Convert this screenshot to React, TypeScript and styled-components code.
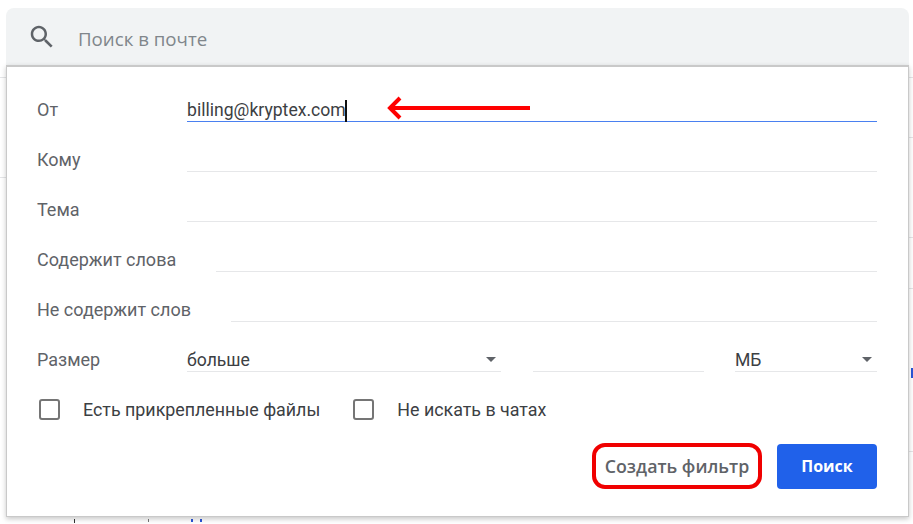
import React from 'react';
import styled, { createGlobalStyle } from 'styled-components';

const GlobalStyle = createGlobalStyle`
  html, body {
    margin: 0;
    padding: 0;
    background: #fff;
    overflow: hidden;
  }
  * { box-sizing: border-box; }
`;

const Page = styled.div`
  position: relative;
  width: 913px;
  height: 524px;
  padding: 8px 4px 0 6px;
  background: #fff;
  font-family: Roboto, "Liberation Sans", sans-serif;
  overflow: hidden;
`;

/* bits of the inbox list that show around the dialog */
const PeekLine = styled.div<{ $top: number; $left: number; $width: number }>`
  position: absolute;
  top: ${p => p.$top}px;
  left: ${p => p.$left}px;
  width: ${p => p.$width}px;
  height: 1px;
  background: #e4e5e7;
`;

const PeekMark = styled.div<{ $left: number; $top: number; $color: string; $w?: number; $h?: number }>`
  position: absolute;
  left: ${p => p.$left}px;
  top: ${p => p.$top}px;
  width: ${p => p.$w ?? 1}px;
  height: ${p => p.$h ?? 4}px;
  background: ${p => p.$color};
`;

const SearchBar = styled.div`
  position: relative;
  display: flex;
  align-items: center;
  height: 58px;
  padding-left: 21px;
  background: #f1f3f4;
  border-radius: 8px 8px 0 0;
`;

const SearchIcon = styled.svg`
  width: 30px;
  height: 30px;
  fill: #5f6368;
  flex: none;
`;

const SearchPlaceholder = styled.span`
  margin-left: 21px;
  padding-top: 2px;
  font-family: "Open Sans", sans-serif;
  font-size: 18.7px;
  color: #80868b;
`;

const Panel = styled.div`
  position: relative;
  height: 452px;
  padding: 5px 31px 0 30px;
  background: #fff;
  border: 1px solid #c9c9c9;
  border-top-width: 2px;
  margin-top: -1px;
  box-shadow: 0 2px 5px rgba(0, 0, 0, 0.22);
`;

const Row = styled.div`
  position: relative;
  display: flex;
  height: 50px;
  align-items: flex-end;
`;

const Label = styled.label`
  flex: none;
  min-width: 150px;
  padding-right: 40px;
  height: 30px;
  line-height: 36px;
  font-size: 18px;
  color: #5f6368;
`;

const Field = styled.div<{ $active?: boolean; $width?: number }>`
  position: relative;
  display: flex;
  align-items: center;
  justify-content: space-between;
  flex: ${p => (p.$width ? `0 0 ${p.$width}px` : '1')};
  height: 30px;
  line-height: 26px;
  padding-top: 6px;
  font-size: 17.6px;
  color: #3c4043;
  border-bottom: 1px solid ${p => (p.$active ? '#4a80f0' : '#e6e7e9')};
`;

const SizeFields = styled.div`
  display: flex;
  flex: 1;
  gap: 31.5px;
`;

const TextCursor = styled.span`
  display: inline-block;
  width: 2px;
  height: 22px;
  margin-left: -1px;
  background: #111;
  vertical-align: middle;
`;

const ArrowAnnotation = styled.svg`
  position: absolute;
  left: 349px;
  top: 23px;
  width: 144px;
  height: 26px;
`;

const Caret = styled.span`
  width: 0;
  height: 0;
  margin-right: 5px;
  border-left: 5px solid transparent;
  border-right: 5px solid transparent;
  border-top: 5px solid #5f6368;
`;

const OptionsRow = styled.div`
  display: flex;
  align-items: center;
  height: 40px;
  margin-top: 17px;
  padding-left: 2px;
`;

const Box = styled.span`
  flex: none;
  width: 21px;
  height: 21px;
  border: 2px solid #757575;
  border-radius: 3px;
`;

const OptionText = styled.span`
  margin: 0 33px 0 23px;
  font-size: 17.85px;
  color: #3c4043;
`;

const Actions = styled.div`
  display: flex;
  justify-content: flex-end;
  align-items: center;
  gap: 15px;
  margin-top: 14px;
`;

const FilterButton = styled.button`
  width: 170px;
  height: 46px;
  padding: 0;
  background: #fff;
  border: 4px solid #f00000;
  border-radius: 13px;
  font-family: "Open Sans", sans-serif;
  font-size: 17.8px;
  font-weight: 600;
  color: #5f6368;
`;

const SearchButton = styled.button`
  width: 100px;
  height: 45px;
  padding: 0;
  background: #2061ea;
  border: 0;
  border-radius: 4px;
  font-family: "Open Sans", sans-serif;
  font-size: 16px;
  font-weight: 700;
  color: #fff;
`;

const TextRow = ({ label }: { label: string }) => (
  <Row>
    <Label>{label}</Label>
    <Field />
  </Row>
);

const CheckOption = ({ text }: { text: string }) => (
  <>
    <Box />
    <OptionText>{text}</OptionText>
  </>
);

export default function App() {
  return (
    <Page>
      <GlobalStyle />
      <PeekLine $top={77} $left={0} $width={6} />
      <PeekLine $top={177} $left={0} $width={6} />
      <PeekLine $top={77} $left={909} $width={4} />
      <PeekLine $top={137} $left={909} $width={4} />
      <PeekLine $top={237} $left={909} $width={4} />
      <PeekLine $top={288} $left={909} $width={4} />
      <PeekLine $top={451} $left={909} $width={4} />
      <PeekMark $left={911} $top={368} $color="#2a56d8" $w={2} $h={10} />
      <PeekMark $left={74} $top={519} $color="#333" />
      <PeekMark $left={148} $top={519} $color="#777" $h={3} />
      <PeekMark $left={191} $top={519} $color="#2a56d8" $w={2} $h={3} />
      <PeekMark $left={200} $top={519} $color="#2a56d8" $w={2} $h={3} />

      <SearchBar>
        <SearchIcon viewBox="0 0 24 24">
          <path d="M15.5 14h-.79l-.28-.27C15.41 12.59 16 11.11 16 9.5 16 5.91 13.09 3 9.5 3S3 5.91 3 9.5 5.91 16 9.5 16c1.61 0 3.09-.59 4.23-1.57l.27.28v.79l5 4.99L20.49 19l-4.99-5zm-6 0C7.01 14 5 11.99 5 9.5S7.01 5 9.5 5 14 7.01 14 9.5 11.99 14 9.5 14z" />
        </SearchIcon>
        <SearchPlaceholder>Поиск в почте</SearchPlaceholder>
      </SearchBar>

      <Panel>
        <Row>
          <Label>От</Label>
          <Field $active>
            <span>
              billing@kryptex.com
              <TextCursor />
            </span>
          </Field>
          <ArrowAnnotation viewBox="0 0 144 26">
            <path d="M144 13H6" stroke="#ff0000" strokeWidth="4" fill="none" />
            <path d="M14 3L4 13l10 10" stroke="#ff0000" strokeWidth="4" fill="none" />
          </ArrowAnnotation>
        </Row>
        <TextRow label="Кому" />
        <TextRow label="Тема" />
        <TextRow label="Содержит слова" />
        <TextRow label="Не содержит слов" />
        <Row>
          <Label>Размер</Label>
          <SizeFields>
            <Field $width={314}>
              больше
              <Caret />
            </Field>
            <Field $width={171} />
            <Field $width={142}>
              МБ
              <Caret />
            </Field>
          </SizeFields>
        </Row>
        <OptionsRow>
          <CheckOption text="Есть прикрепленные файлы" />
          <CheckOption text="Не искать в чатах" />
        </OptionsRow>
        <Actions>
          <FilterButton>Создать фильтр</FilterButton>
          <SearchButton>Поиск</SearchButton>
        </Actions>
      </Panel>
    </Page>
  );
}
